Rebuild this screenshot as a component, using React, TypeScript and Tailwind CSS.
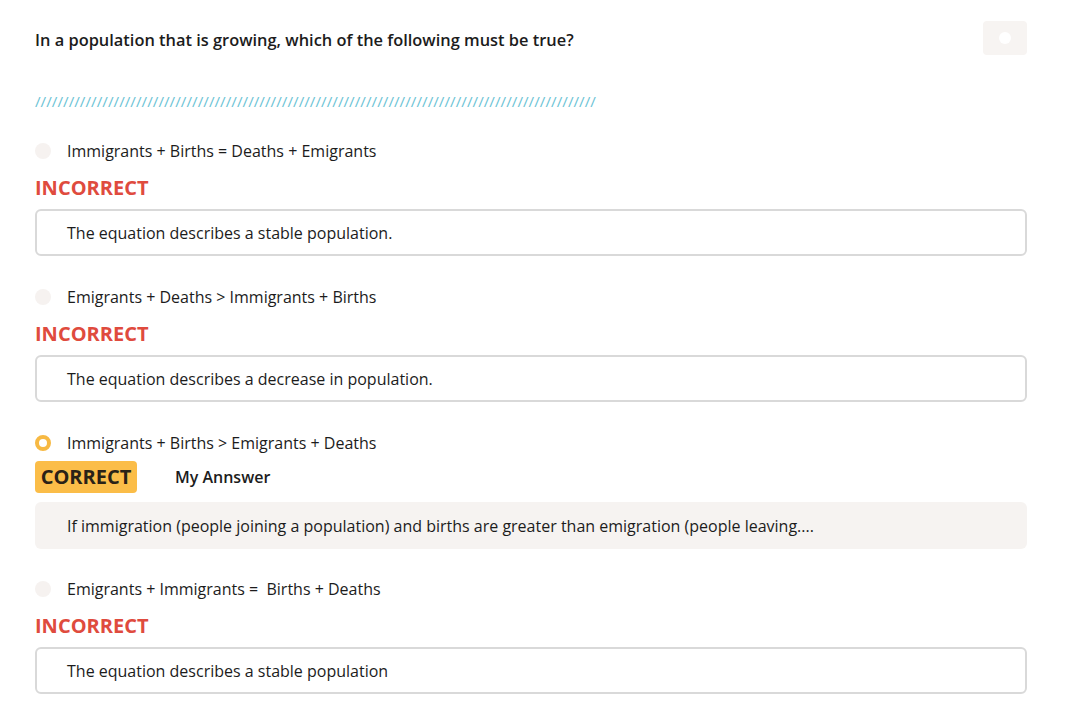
import React from 'react';

type Option = {
  text: string;
  correct: boolean;
  mine?: boolean;
  feedback: string;
};

const options: Option[] = [
  {
    text: 'Immigrants + Births = Deaths + Emigrants',
    correct: false,
    feedback: 'The equation describes a stable population.'
  },
  {
    text: 'Emigrants + Deaths > Immigrants + Births',
    correct: false,
    feedback: 'The equation describes a decrease in population.'
  },
  {
    text: 'Immigrants + Births > Emigrants + Deaths',
    correct: true,
    mine: true,
    feedback:
      'If immigration (people joining a population) and births are greater than emigration (people leaving....'
  },
  {
    text: 'Emigrants + Immigrants =\u00a0 Births + Deaths',
    correct: false,
    feedback: 'The equation describes a stable population'
  }
];

const App = () => {
  return (
    <div className="min-h-screen bg-white font-['Open_Sans',sans-serif] text-[#1c1c1c]">
      <div className="px-[35px] pt-[29px] w-[1062px]">
        <div className="flex items-center justify-between h-[22px]">
          <h1 className="text-[16.4px] font-semibold leading-[22px]">
            In a population that is growing, which of the following must be true?
          </h1>
          <button className="w-[44px] h-[34px] -mt-[4px] shrink-0 rounded bg-[#f7f4f2] flex items-center justify-center">
            <span className="w-[12px] h-[12px] rounded-full bg-white" />
          </button>
        </div>

        <div className="mt-[40px] h-[20px] text-[15.3px] leading-[20px] text-[#6cc3d5] overflow-hidden whitespace-nowrap w-[564px]">
          {'/'.repeat(100)}
        </div>

        <div className="mt-[29px] flex flex-col gap-[29px]">
          {options.map((o, i) => (
            <div key={i} className="h-[117px]">
              <div className="flex items-center h-[22px]">
                {o.mine ? (
                  <span className="w-[16px] h-[16px] rounded-full border-[4px] border-[#f7b943] bg-white" />
                ) : (
                  <span className="w-[16px] h-[16px] rounded-full bg-[#f6f2f0]" />
                )}
                <span className="ml-[16px] text-[16px] leading-[22px]">{o.text}</span>
              </div>
              {o.correct ? (
                <div className="flex items-center mt-[7px] h-[32px]">
                  <span className="h-[32px] w-[102px] rounded bg-[#fbbd48] flex items-center justify-center text-[20px] font-bold text-[#2a2217]">
                    CORRECT
                  </span>
                  <span className="ml-[38px] text-[16px] font-semibold">My Annswer</span>
                </div>
              ) : (
                <div className="mt-[14px] h-[24px] text-[20px] leading-[24px] font-bold text-[#df4b3e]">
                  INCORRECT
                </div>
              )}
              {o.correct ? (
                <div className="mt-[9px] h-[47px] rounded-md bg-[#f6f3f1] flex items-center pl-[32px] text-[16px]">
                  {o.feedback}
                </div>
              ) : (
                <div className="mt-[9px] h-[47px] rounded-md border-2 border-[#d9d9d9] flex items-center pl-[30px] text-[16px]">
                  {o.feedback}
                </div>
              )}
            </div>
          ))}
        </div>
      </div>
    </div>
  );
};

export default App;
